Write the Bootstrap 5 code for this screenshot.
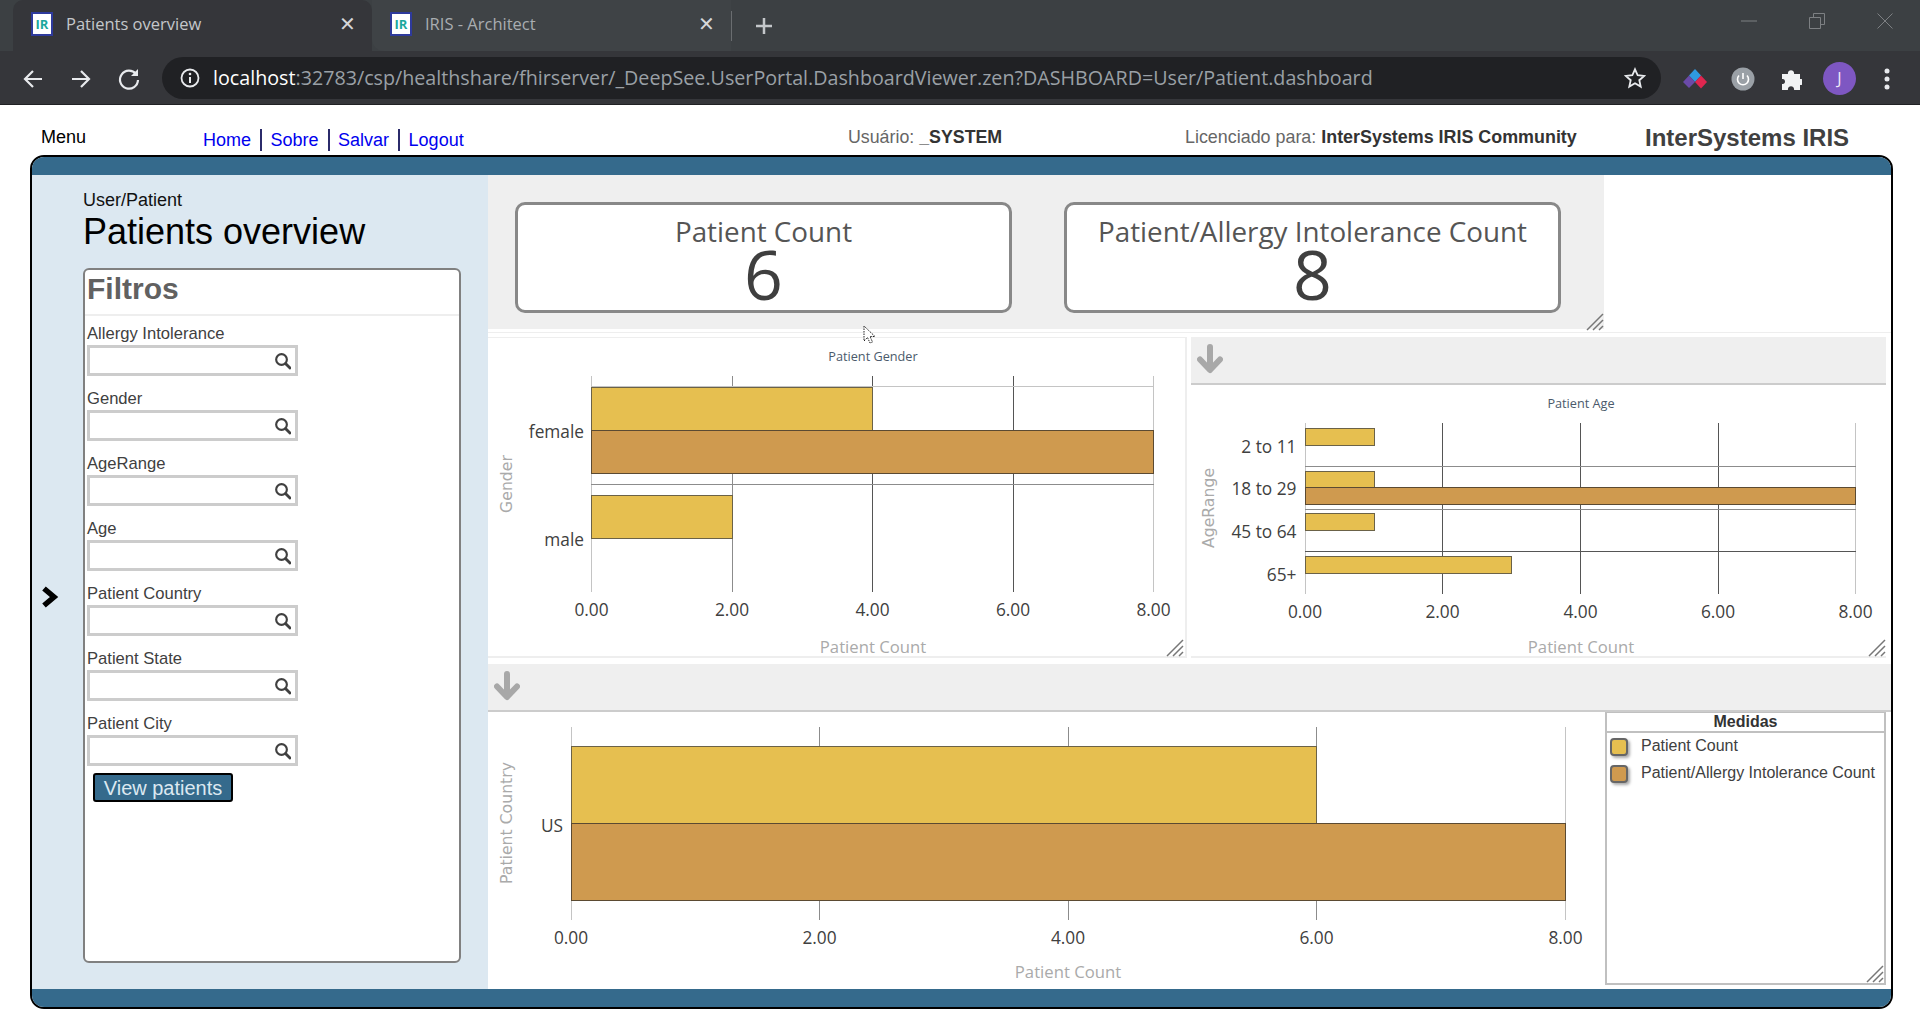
<!DOCTYPE html>
<html lang="pt">
<head>
<meta charset="utf-8">
<title>Patients overview</title>
<link href="https://cdn.jsdelivr.net/npm/bootstrap@5.3.0/dist/css/bootstrap.min.css" rel="stylesheet">
<style>
html,body{margin:0;height:1020px;overflow:hidden;background:#fff;font-family:"Liberation Sans",Arial,sans-serif}
.ui-font{font-family:"Open Sans","Noto Sans",sans-serif}
.tabstrip{height:51px;background:#3c4043;color:#bdc1c6}
.ctab{height:51px;font-size:16.5px}
.ctab-a{width:359px;margin-left:13px;background:#35363a;border-radius:10px 10px 0 0;padding:0 16px 3px 18px;color:#c4c7ca}
.ctab-b{width:359px;padding:0 16px 3px 18px;color:#a9adb1;background:#3f4346;border-radius:0 0 0 12px}
.ctab-title{margin-left:13px}
.ctab-x{font-size:20px;line-height:1;color:#d5d7d9}
.tab-sep{width:1px;height:30px;background:#6a6d70}
.plus-ic{margin-left:23px}
.winbtns{width:179px;padding:13px 27px 0 0}
.toolbar{height:54px;background:#35363a;border-bottom:1px solid #202124;padding-top:1px}
.tool-lead{margin-left:9px}
.tool-ic{width:48px}
.omni{width:1499px;height:42px;background:#202124;border-radius:21px;padding:0 15px 0 18px;margin-left:9px}
.url{font-size:19.690px;color:#9aa0a6;margin-left:13px;white-space:nowrap}
.url b{font-weight:400;color:#fff}
.ext{width:48px}
.ext-first{margin-left:10px}
.pagehead{height:50px;padding-top:14px}
.h-menu{width:203px;padding-left:41px;font-size:18px;color:#000}
.h-links{width:645px;font-size:18px;display:flex;align-items:center;line-height:22px;margin-top:6px}
.h-links a{color:#00e;text-decoration:none}
.h-links a+a{border-left:2px solid #2b2b6b;margin-left:9px;padding-left:8.500px}
.h-user{width:337px;font-size:17.800px;color:#666}
.h-lic{width:460px;font-size:17.900px;color:#666;white-space:nowrap}
.h-user b,.h-lic b{color:#333}
.h-brand{font-size:24px;font-weight:700;color:#404040;margin-top:2px;white-space:nowrap}
.dash{margin-left:30px;width:1863px;height:854px;border:2px solid #000;border-radius:14px;overflow:hidden}
.band{height:18px;background:#356a8c}
.dash-main{height:814px}
.side{width:456px;background:#dce8f1}
.side-toggle{width:51px;padding:29px 0 0 8px}
.side-body{width:378px;padding-top:15px}
.crumb{font-size:18px;line-height:20px;color:#111}
.dash-title{font-size:36px;font-weight:400;line-height:43px;margin:0;color:#000}
.filters{height:695px;margin-top:15px;background:#fff;border:2px solid #808080;border-radius:6px}
.filters-head{height:46px;border-bottom:2px solid #eee;padding-left:2px;font-size:30px;line-height:38px;font-weight:700;color:#616161}
.filters-body{padding:7px 2px 0}
.f-label{font-size:16.600px;line-height:22px;color:#404040}
.f-row{margin-bottom:12px}
.f-box{width:211px;height:31px;border:3px solid #ccc;background:#fff;padding-right:4px}
.f-box input{border:0;outline:0;min-width:0;background:transparent;padding:0}
.view-btn{margin:-6px 0 0 6px;height:29px;width:140px;padding:0;background:#356a8c;border:2px solid #000;border-radius:3px;color:#dce8f1;font-size:20px;line-height:24px}
.content{width:1403px}
.top-sec{width:1116px;height:154px;background:#efefef;padding:27px 0 0 27px;gap:52px}
.kpi{width:497px;height:111px;border:3px solid #888;border-radius:10px;text-align:center;color:#404040}
.kpi-t{font-size:27.800px;line-height:30px;margin-top:11px;color:#555}
.kpi-n{font-size:68px;line-height:62px;margin-top:-3px;color:#3f3f3f}
.rule-a{height:8px;border-top:1px solid #fff}
.rule-a::after{content:"";display:block;height:1px;margin-top:2px;background:#eee}
.row-two{height:321px;gap:4px}
.panel-a{width:699px;border:solid #eee;border-width:1px 2px 2px 0}
.panel-b{width:695px;border:solid #eee;border-width:0 0 2px 0}
.ph{height:48px;background:#efefef;border-bottom:2px solid #ccc;padding:7px 0 0 6px}
.gap6{height:6px}
.row-three{height:271px}
.legend-box{width:281px;height:273px;border:2px solid #c0c0c0;border-top-width:1px;position:relative}
.legend-head{height:20px;border-bottom:2px solid #c0c0c0;text-align:center;font-size:16px;line-height:18px;font-weight:700;color:#333}
.legend-item{height:27px;padding-left:3px;font-size:16px;line-height:16px;color:#404040}
.swatch{width:18px;height:18px;border:2px solid #666;border-radius:4px;box-shadow:2px 2px 3px #aaa;margin-right:13px;flex:none}
.legend-list{padding-top:5px}
.corner{position:absolute;right:0;bottom:0}
.corner-low{bottom:-2px}
.chart-svg{display:block;overflow:visible}
svg text{font-family:"Open Sans","Noto Sans",sans-serif}
.t-tick{font-size:17.300px;fill:#404040}
.t-axis{font-size:16.700px;fill:#aaa}
.t-title{font-size:12.700px;fill:#4b5a6b}
.t-vert{font-size:15.700px;fill:#aaa;font-family:"DejaVu Sans",sans-serif !important}
.bar-y{fill:#e6bf50;stroke:#6b6247;stroke-width:1}
.bar-b{fill:#cf9a4f;stroke:#5b4a32;stroke-width:1}
.grid-d{stroke:#555;stroke-width:1}
.grid-m{stroke:#8c8c8c;stroke-width:1}
.grid-l{stroke:#c4c4c4;stroke-width:1}
.cursor-wrap{position:absolute;left:863px;top:325px}
</style>
</head>
<body class="position-relative">
<svg width="0" height="0" class="d-block" aria-hidden="true"><defs>
<symbol id="mag" viewBox="0 0 18 18"><circle cx="7.300" cy="7.300" r="6" fill="none" stroke="#404040" stroke-width="2.400"/><path d="M12 12L16.800 16.800" stroke="#404040" stroke-width="3.200" stroke-linecap="round"/></symbol>
<symbol id="fav" viewBox="0 0 22 24"><rect x="1" y="1" width="20" height="22" fill="#fff" stroke="#2e3a9c" stroke-width="2"/><text x="11" y="17" text-anchor="middle" font-family="Liberation Serif,serif" font-weight="700" font-size="13" fill="#1aa79c">IR</text></symbol>
<symbol id="down" viewBox="0 0 26 30"><path d="M13 3V25M3 15.500L13 26 23 15.500" fill="none" stroke="#a8a8a8" stroke-width="6" stroke-linecap="round" stroke-linejoin="round"/></symbol>
<symbol id="grip" viewBox="0 0 18 18"><path d="M1 17L17 1M7 17L17 7M13 17L17 13" stroke="#777" stroke-width="1.500" fill="none"/></symbol>
</defs></svg>

<div class="tabstrip d-flex align-items-center ui-font">
  <div class="ctab ctab-a d-flex align-items-center"><svg width="22" height="24"><use href="#fav"/></svg><span class="ctab-title flex-grow-1">Patients overview</span><span class="ctab-x">✕</span></div>
  <div class="ctab ctab-b d-flex align-items-center"><svg width="22" height="24"><use href="#fav"/></svg><span class="ctab-title flex-grow-1">IRIS - Architect</span><span class="ctab-x">✕</span></div>
  <div class="tab-sep"></div>
  <svg class="plus-ic" width="18" height="18" viewBox="0 0 18 18"><path d="M9 1V17M1 9H17" stroke="#c4c7ca" stroke-width="2.500"/></svg>
  <div class="winbtns ms-auto d-flex justify-content-between align-items-start align-self-start">
    <svg width="16" height="16" viewBox="0 0 16 16"><path d="M0 8H16" stroke="#7d8083"/></svg>
    <svg width="16" height="16" viewBox="0 0 16 16"><path d="M.5 4.500H11.500V15.500H.5ZM4.500 4.500V.5H15.500V11.500H11.500" fill="none" stroke="#7d8083"/></svg>
    <svg width="16" height="16" viewBox="0 0 16 16"><path d="M.5.5L15.500 15.500M15.500.5L.5 15.500" fill="none" stroke="#7d8083"/></svg>
  </div>
</div>
<div class="toolbar d-flex align-items-center ui-font">
  <div class="tool-ic tool-lead text-center"><svg width="22" height="22" viewBox="0 0 22 22"><path d="M20 11H3M11 3L3 11l8 8" fill="none" stroke="#e8eaed" stroke-width="2.200"/></svg></div>
  <div class="tool-ic text-center"><svg width="22" height="22" viewBox="0 0 22 22"><path d="M2 11H19M11 3l8 8-8 8" fill="none" stroke="#e8eaed" stroke-width="2.200"/></svg></div>
  <div class="tool-ic text-center"><svg width="24" height="24" viewBox="0 0 24 24"><path d="M19 7A9 9 0 1 0 21 13" fill="none" stroke="#e8eaed" stroke-width="2.200"/><path d="M21 2V9H14Z" fill="#e8eaed"/></svg></div>
  <div class="omni d-flex align-items-center">
    <svg width="20" height="20" viewBox="0 0 20 20"><circle cx="10" cy="10" r="8.500" fill="none" stroke="#e8eaed" stroke-width="1.800"/><path d="M10 9V15" stroke="#e8eaed" stroke-width="2"/><circle cx="10" cy="6" r="1.300" fill="#e8eaed"/></svg>
    <span class="url flex-grow-1"><b>localhost</b>:32783/csp/healthshare/fhirserver/_DeepSee.UserPortal.DashboardViewer.zen?DASHBOARD=User/Patient.dashboard</span>
    <svg width="22" height="22" viewBox="0 0 24 24"><path d="M12 2.500l2.900 6.500 7.100.7-5.300 4.700 1.500 7-6.200-3.600-6.200 3.600 1.500-7L2 9.700l7.100-.7Z" fill="none" stroke="#e8eaed" stroke-width="2"/></svg>
  </div>
  <div class="ext ext-first text-center"><svg width="26" height="22" viewBox="0 0 26 22"><path d="M13 1l6 6.500-6 6.500-6-6.500Z" fill="#2f9ae0"/><path d="M7 7.500l6 6.500-6 6-6-6Z" fill="#6a4aa8"/><path d="M19 7.500l6 6.500-6 6.500-6-6.500Z" fill="#e0264f"/></svg></div>
  <div class="ext text-center"><svg width="24" height="24" viewBox="0 0 24 24"><circle cx="12" cy="12" r="11.500" fill="#9aa0a6"/><path d="M8 8.500a5.500 5.500 0 1 0 8 0M12 6V12" fill="none" stroke="#fff" stroke-width="1.600"/></svg></div>
  <div class="ext text-center"><svg width="22" height="24" viewBox="0 0 22 24"><path d="M2 7H8C7 2 15 2 14 7H20V12C25 11 25 19 20 18V23H14C15 18 7 18 8 23H2V17C6 18 6 11 2 12Z" fill="#f1f3f4"/></svg></div>
  <div class="ext text-center"><svg width="33" height="33" viewBox="0 0 33 33"><circle cx="16.500" cy="16.500" r="16.500" fill="#7e57c2"/><text x="16.500" y="22" text-anchor="middle" font-size="16" fill="#f1ecf9">J</text></svg></div>
  <div class="ext text-center"><svg width="6" height="22" viewBox="0 0 6 22"><circle cx="3" cy="3" r="2.500" fill="#e8eaed"/><circle cx="3" cy="11" r="2.500" fill="#e8eaed"/><circle cx="3" cy="19" r="2.500" fill="#e8eaed"/></svg></div>
</div>

<div class="pagehead d-flex align-items-center">
  <div class="h-menu">Menu</div>
  <div class="h-links"><a href="#">Home</a><a href="#">Sobre</a><a href="#">Salvar</a><a href="#">Logout</a></div>
  <div class="h-user">Usuário: <b>_SYSTEM</b></div>
  <div class="h-lic">Licenciado para: <b>InterSystems IRIS Community</b></div>
  <div class="h-brand">InterSystems IRIS</div>
</div>

<div class="dash">
  <div class="band"></div>
  <div class="dash-main d-flex">
    <div class="side d-flex">
      <div class="side-toggle d-flex align-items-center"><svg width="20" height="22" viewBox="0 0 20 22"><path d="M4 2.500L14 11 4 19.500" fill="none" stroke="#000" stroke-width="5.500"/></svg></div>
      <div class="side-body">
        <div class="crumb">User/Patient</div>
        <h1 class="dash-title">Patients overview</h1>
        <div class="filters">
          <div class="filters-head">Filtros</div>
          <div class="filters-body">
            <div class="f-row"><div class="f-label">Allergy Intolerance</div><div class="f-box d-flex align-items-center"><input class="flex-grow-1" aria-label="Allergy Intolerance"><svg width="18" height="18"><use href="#mag"/></svg></div></div>
            <div class="f-row"><div class="f-label">Gender</div><div class="f-box d-flex align-items-center"><input class="flex-grow-1" aria-label="Gender"><svg width="18" height="18"><use href="#mag"/></svg></div></div>
            <div class="f-row"><div class="f-label">AgeRange</div><div class="f-box d-flex align-items-center"><input class="flex-grow-1" aria-label="AgeRange"><svg width="18" height="18"><use href="#mag"/></svg></div></div>
            <div class="f-row"><div class="f-label">Age</div><div class="f-box d-flex align-items-center"><input class="flex-grow-1" aria-label="Age"><svg width="18" height="18"><use href="#mag"/></svg></div></div>
            <div class="f-row"><div class="f-label">Patient Country</div><div class="f-box d-flex align-items-center"><input class="flex-grow-1" aria-label="Patient Country"><svg width="18" height="18"><use href="#mag"/></svg></div></div>
            <div class="f-row"><div class="f-label">Patient State</div><div class="f-box d-flex align-items-center"><input class="flex-grow-1" aria-label="Patient State"><svg width="18" height="18"><use href="#mag"/></svg></div></div>
            <div class="f-row"><div class="f-label">Patient City</div><div class="f-box d-flex align-items-center"><input class="flex-grow-1" aria-label="Patient City"><svg width="18" height="18"><use href="#mag"/></svg></div></div>
            <button type="button" class="btn view-btn">View patients</button>
          </div>
        </div>
      </div>
    </div>
    <div class="content">
      <div class="d-flex">
        <div class="top-sec d-flex position-relative ui-font">
          <div class="kpi card"><div class="kpi-t">Patient Count</div><div class="kpi-n">6</div></div>
          <div class="kpi card"><div class="kpi-t">Patient/Allergy Intolerance Count</div><div class="kpi-n">8</div></div>
          <svg class="corner corner-low" width="18" height="18"><use href="#grip"/></svg>
        </div>
      </div>
      <div class="rule-a"></div>
      <div class="row-two d-flex">
        <div class="panel-a">
          <svg class="chart-svg" width="697" height="318" viewBox="488 338 697 318">
            <text class="t-title" x="873" y="361" text-anchor="middle">Patient Gender</text>
            <g shape-rendering="crispEdges">
            <line class="grid-l" x1="591.500" x2="591.500" y1="376" y2="592"/><line class="grid-m" x1="732.500" x2="732.500" y1="376" y2="592"/><line class="grid-d" x1="872.500" x2="872.500" y1="376" y2="592"/><line class="grid-d" x1="1013.500" x2="1013.500" y1="376" y2="592"/><line class="grid-l" x1="1153.500" x2="1153.500" y1="376" y2="592"/>
            <line class="grid-l" x1="591" x2="1154" y1="386.500" y2="386.500"/><line class="grid-m" x1="591" x2="1154" y1="484.500" y2="484.500"/>
            <rect class="bar-y" x="591.500" y="387.500" width="281" height="43"/><rect class="bar-b" x="591.500" y="430.500" width="562" height="43"/><rect class="bar-y" x="591.500" y="495.500" width="141" height="43"/>
            </g>
            <text class="t-tick" x="584" y="438" text-anchor="end">female</text><text class="t-tick" x="584" y="546" text-anchor="end">male</text>
            <text class="t-tick" x="591.500" y="616" text-anchor="middle">0.00</text><text class="t-tick" x="732" y="616" text-anchor="middle">2.00</text><text class="t-tick" x="872.500" y="616" text-anchor="middle">4.00</text><text class="t-tick" x="1013" y="616" text-anchor="middle">6.00</text><text class="t-tick" x="1153.500" y="616" text-anchor="middle">8.00</text>
            <text class="t-axis" x="873" y="652.500" text-anchor="middle">Patient Count</text>
            <text class="t-vert" transform="translate(512 484) rotate(-90)" text-anchor="middle">Gender</text>
            <use href="#grip" x="1166" y="639" width="18" height="18"/>
          </svg>
        </div>
        <div class="panel-b">
          <div class="ph"><svg class="d-block" width="26" height="30"><use href="#down"/></svg></div>
          <svg class="chart-svg" width="695" height="271" viewBox="1191 385 695 271">
            <text class="t-title" x="1581" y="408" text-anchor="middle">Patient Age</text>
            <g shape-rendering="crispEdges">
            <line class="grid-l" x1="1305.500" x2="1305.500" y1="423" y2="594"/><line class="grid-d" x1="1442.500" x2="1442.500" y1="423" y2="594"/><line class="grid-d" x1="1580.500" x2="1580.500" y1="423" y2="594"/><line class="grid-d" x1="1718.500" x2="1718.500" y1="423" y2="594"/><line class="grid-l" x1="1855.500" x2="1855.500" y1="423" y2="594"/>
            <line class="grid-m" x1="1305" x2="1856" y1="466.500" y2="466.500"/><line class="grid-m" x1="1305" x2="1856" y1="509.500" y2="509.500"/><line class="grid-d" x1="1305" x2="1856" y1="551.500" y2="551.500"/>
            <rect class="bar-y" x="1305.500" y="428.500" width="68.500" height="17"/><rect class="bar-y" x="1305.500" y="471.500" width="68.500" height="16"/><rect class="bar-b" x="1305.500" y="487.500" width="550" height="17"/><rect class="bar-y" x="1305.500" y="513.500" width="68.500" height="17"/><rect class="bar-y" x="1305.500" y="556.500" width="206" height="17"/>
            </g>
            <text class="t-tick" x="1296.500" y="453" text-anchor="end">2 to 11</text><text class="t-tick" x="1296.500" y="495" text-anchor="end">18 to 29</text><text class="t-tick" x="1296.500" y="538" text-anchor="end">45 to 64</text><text class="t-tick" x="1296.500" y="581" text-anchor="end">65+</text>
            <text class="t-tick" x="1305" y="618" text-anchor="middle">0.00</text><text class="t-tick" x="1442.500" y="618" text-anchor="middle">2.00</text><text class="t-tick" x="1580.500" y="618" text-anchor="middle">4.00</text><text class="t-tick" x="1718" y="618" text-anchor="middle">6.00</text><text class="t-tick" x="1855.500" y="618" text-anchor="middle">8.00</text>
            <text class="t-axis" x="1581" y="652.500" text-anchor="middle">Patient Count</text>
            <text class="t-vert" transform="translate(1214 508) rotate(-90)" text-anchor="middle">AgeRange</text>
            <use href="#grip" x="1868" y="639" width="18" height="18"/>
          </svg>
        </div>
      </div>
      <div class="gap6"></div>
      <div class="ph"><svg class="d-block" width="26" height="30"><use href="#down"/></svg></div>
      <div class="row-three d-flex">
        <svg class="chart-svg" width="1117" height="271" viewBox="488 712 1117 271">
          <g shape-rendering="crispEdges">
          <line class="grid-l" x1="571.500" x2="571.500" y1="727" y2="920"/><line class="grid-m" x1="819.500" x2="819.500" y1="727" y2="920"/><line class="grid-m" x1="1068.500" x2="1068.500" y1="727" y2="920"/><line class="grid-m" x1="1316.500" x2="1316.500" y1="727" y2="920"/><line class="grid-l" x1="1565.500" x2="1565.500" y1="727" y2="920"/>
          <rect class="bar-y" x="571.500" y="746.500" width="745" height="77"/><rect class="bar-b" x="571.500" y="823.500" width="994" height="77"/>
          </g>
          <text class="t-tick" x="563" y="832" text-anchor="end">US</text>
          <text class="t-tick" x="571" y="944" text-anchor="middle">0.00</text><text class="t-tick" x="819.500" y="944" text-anchor="middle">2.00</text><text class="t-tick" x="1068" y="944" text-anchor="middle">4.00</text><text class="t-tick" x="1316.500" y="944" text-anchor="middle">6.00</text><text class="t-tick" x="1565.500" y="944" text-anchor="middle">8.00</text>
          <text class="t-axis" x="1068" y="978" text-anchor="middle">Patient Count</text>
          <text class="t-vert" transform="translate(512 823) rotate(-90)" text-anchor="middle">Patient Country</text>
        </svg>
        <div class="legend-box">
          <div class="legend-head">Medidas</div>
          <div class="legend-list">
            <div class="legend-item d-flex"><span class="swatch" style="background:#e6bf50"></span><span>Patient Count</span></div>
            <div class="legend-item d-flex"><span class="swatch" style="background:#cf9a4f"></span><span class="text-nowrap">Patient/Allergy Intolerance Count</span></div>
          </div>
          <svg class="corner" width="18" height="18"><use href="#grip"/></svg>
        </div>
      </div>
    </div>
  </div>
  <div class="band"></div>
</div>

<svg class="cursor-wrap" width="14" height="20" viewBox="0 0 14 20"><path d="M1 1V16L4.500 12.500 7 18 9.500 17 7 11.500H12Z" fill="#fff" stroke="#222" stroke-dasharray="1.500 1"/></svg>
<script src="https://cdn.jsdelivr.net/npm/bootstrap@5.3.0/dist/js/bootstrap.bundle.min.js"></script>
</body>
</html>
